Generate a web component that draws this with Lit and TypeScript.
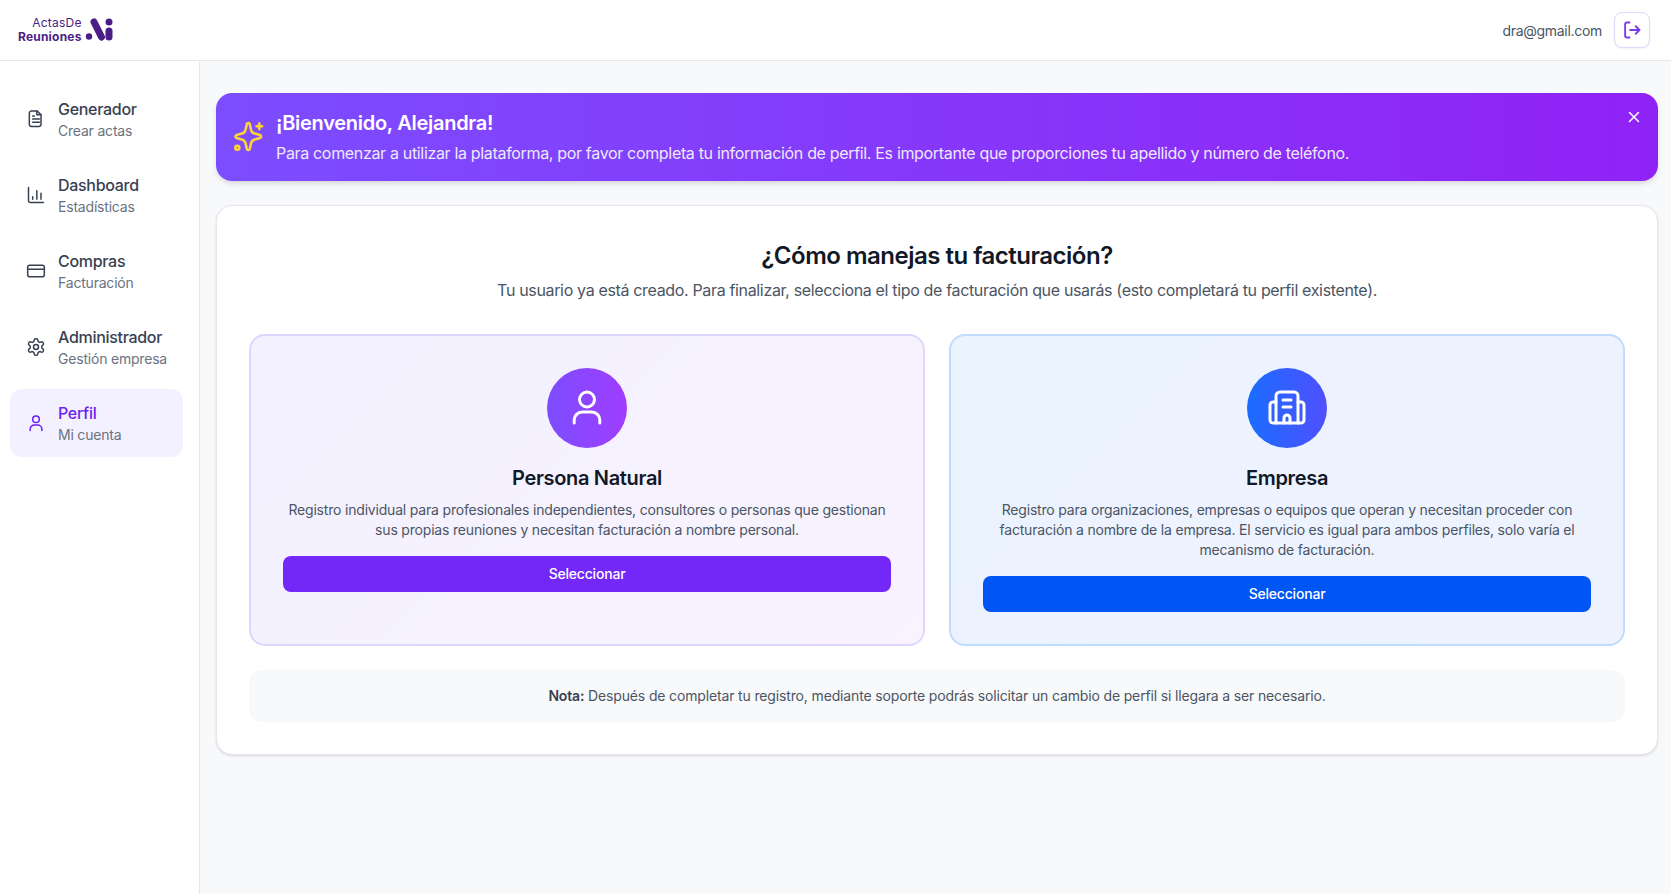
import { LitElement, html, css, svg } from "lit";
import { customElement } from "lit/decorators.js";

const navIcons: Record<string, unknown> = {
  file: svg`<path d="M6.5 2.5h7l4.500 4.500v11.500a2.500 2.500 0 0 1-2.500 2.500H6.500A2.500 2.500 0 0 1 4 18.500v-13.500a2.500 2.500 0 0 1 2.500-2.500z"/><path d="M13 2.500V7h5M8 12h8M8 16h8M8 8.500h2"/>`,
  chart: svg`<path d="M3 3v16a2 2 0 0 0 2 2h16M8 17v-3M13 17V7M18 17V10"/>`,
  card: svg`<rect x="2" y="5" width="20" height="14" rx="2.5"/><path d="M2 10h20"/>`,
  gear: svg`<path d="M12.22 2h-.44a2 2 0 0 0-2 2v.18a2 2 0 0 1-1 1.73l-.43.25a2 2 0 0 1-2 0l-.15-.08a2 2 0 0 0-2.73.73l-.22.38a2 2 0 0 0 .73 2.73l.15.1a2 2 0 0 1 1 1.72v.51a2 2 0 0 1-1 1.74l-.15.09a2 2 0 0 0-.73 2.73l.22.38a2 2 0 0 0 2.73.73l.15-.08a2 2 0 0 1 2 0l.43.25a2 2 0 0 1 1 1.73V20a2 2 0 0 0 2 2h.44a2 2 0 0 0 2-2v-.18a2 2 0 0 1 1-1.73l.43-.25a2 2 0 0 1 2 0l.15.08a2 2 0 0 0 2.73-.73l.22-.39a2 2 0 0 0-.73-2.73l-.15-.08a2 2 0 0 1-1-1.74v-.5a2 2 0 0 1 1-1.74l.15-.09a2 2 0 0 0 .73-2.73l-.22-.38a2 2 0 0 0-2.73-.73l-.15.08a2 2 0 0 1-2 0l-.43-.25a2 2 0 0 1-1-1.73V4a2 2 0 0 0-2-2z"/><circle cx="12" cy="12" r="3"/>`,
  user: svg`<circle cx="12" cy="7.5" r="4"/><path d="M5 21v-1.5a5 5 0 0 1 5-5h4a5 5 0 0 1 5 5V21"/>`,
};

const navItems = [
  { icon: "file", title: "Generador", sub: "Crear actas" },
  { icon: "chart", title: "Dashboard", sub: "Estadísticas" },
  { icon: "card", title: "Compras", sub: "Facturación" },
  { icon: "gear", title: "Administrador", sub: "Gestión empresa" },
  { icon: "user", title: "Perfil", sub: "Mi cuenta", active: true },
];

@customElement("app-root")
export class AppRoot extends LitElement {
  static styles = css`
    :host {
      display: flex;
      flex-direction: column;
      height: 100vh;
      overflow: hidden;
      background: #f8f9fb;
      font-family: Inter, "Liberation Sans", sans-serif;
      color: #111827;
    }
    header {
      flex: none;
      height: 60px;
      box-sizing: content-box;
      border-bottom: 1px solid #e5e7eb;
      background: #fff;
      display: flex;
      align-items: center;
      justify-content: space-between;
      padding: 0 21px 0 18px;
    }
    .logo {
      display: flex;
      align-items: center;
      gap: 2px;
      color: #4c1d87;
    }
    .logo-text {
      display: flex;
      flex-direction: column;
      align-items: flex-end;
      font-size: 12px;
      line-height: 14px;
      letter-spacing: 0.2px;
    }
    .logo-text b {
      font-weight: 700;
    }
    .account {
      display: flex;
      align-items: center;
      gap: 12px;
      font-size: 14px;
      letter-spacing: -0.3px;
      color: #4b5563;
    }
    .logout {
      width: 36px;
      height: 36px;
      box-sizing: border-box;
      border: 1px solid #ddd6fe;
      border-radius: 8px;
      background: #fff;
      display: flex;
      align-items: center;
      justify-content: center;
      padding: 0;
      color: #7c3aed;
      box-shadow: 0 1px 2px rgba(0, 0, 0, 0.05);
    }
    .body {
      flex: 1;
      display: flex;
      min-height: 0;
    }
    aside {
      flex: none;
      width: 200px;
      box-sizing: border-box;
      background: #fff;
      border-right: 1px solid #e5e7eb;
      padding: 24px 16px 0 10px;
      display: flex;
      flex-direction: column;
      gap: 8px;
    }
    .nav {
      display: flex;
      align-items: center;
      gap: 12px;
      padding: 12px 16px;
      border-radius: 12px;
      color: #374151;
      white-space: nowrap;
    }
    .nav svg {
      flex: none;
      width: 20px;
      height: 20px;
      fill: none;
      stroke: currentColor;
      stroke-width: 1.8;
      stroke-linecap: round;
      stroke-linejoin: round;
    }
    .nav-title {
      font-size: 16px;
      line-height: 24px;
      font-weight: 500;
      letter-spacing: -0.3px;
    }
    .nav-sub {
      font-size: 14px;
      line-height: 20px;
      letter-spacing: -0.2px;
      color: #6b7280;
    }
    .nav.active {
      background: #f3f0ff;
      color: #6d1ff0;
    }
    main {
      flex: 1;
      min-width: 0;
      padding: 32px 13px 32px 16px;
      display: flex;
      flex-direction: column;
      gap: 24px;
    }
    .banner {
      display: flex;
      align-items: center;
      gap: 12px;
      padding: 16px;
      border-radius: 16px;
      background: linear-gradient(90deg, #7c4dff, #9022f5);
      color: #fff;
      box-shadow: 0 4px 6px -1px rgba(0, 0, 0, 0.1),
        0 2px 4px -2px rgba(0, 0, 0, 0.1);
    }
    .banner-text {
      flex: 1;
    }
    .banner h2 {
      margin: 0 0 4px;
      font-size: 20px;
      line-height: 28px;
      font-weight: 600;
      letter-spacing: -0.28px;
    }
    .banner p {
      margin: 0;
      font-size: 16px;
      line-height: 24px;
      letter-spacing: -0.33px;
      color: #ede9fe;
    }
    .close {
      align-self: flex-start;
      flex: none;
      width: 16px;
      height: 16px;
      color: #fff;
    }
    .card {
      background: #fff;
      border: 1px solid #e5e7eb;
      border-radius: 16px;
      padding: 32px;
      box-shadow: 0 1px 3px rgba(0, 0, 0, 0.1), 0 1px 2px -1px rgba(0, 0, 0, 0.1);
    }
    .card h1 {
      margin: 0 0 6px;
      padding-top: 2px;
      text-align: center;
      font-size: 24px;
      line-height: 32px;
      font-weight: 600;
      letter-spacing: -0.5px;
    }
    .lead {
      margin: 0 0 32px;
      text-align: center;
      font-size: 16px;
      line-height: 24px;
      letter-spacing: -0.34px;
      color: #4b5563;
    }
    .options {
      display: grid;
      grid-template-columns: 1fr 1fr;
      gap: 24px;
    }
    .option {
      border: 2px solid;
      border-radius: 16px;
      padding: 32px;
      display: flex;
      flex-direction: column;
      align-items: center;
      text-align: center;
    }
    .option.person {
      border-color: #ddd6fe;
      background: linear-gradient(135deg, #f3f0ff, #f8f3fe);
    }
    .option.company {
      border-color: #bfdbfe;
      background: linear-gradient(135deg, #ebf3ff, #eef2ff);
    }
    .circle {
      width: 80px;
      height: 80px;
      border-radius: 50%;
      display: flex;
      align-items: center;
      justify-content: center;
      margin-bottom: 16px;
    }
    .person .circle {
      background: linear-gradient(90deg, #7c4dff, #a03dff);
    }
    .company .circle {
      background: linear-gradient(90deg, #1a6dff, #5050ff);
    }
    .circle svg {
      width: 40px;
      height: 40px;
      fill: none;
      stroke: #fff;
      stroke-width: 3;
      stroke-linecap: round;
      stroke-linejoin: round;
    }
    .option h3 {
      margin: 0 0 8px;
      font-size: 20px;
      line-height: 28px;
      font-weight: 600;
      letter-spacing: -0.33px;
    }
    .option p {
      margin: 0 0 16px;
      font-size: 14px;
      line-height: 20px;
      letter-spacing: -0.19px;
      color: #4b5563;
    }
    .select {
      width: 100%;
      height: 36px;
      border: 0;
      border-radius: 8px;
      color: #fff;
      font: 500 14px/20px Inter, "Liberation Sans", sans-serif;
      letter-spacing: -0.2px;
    }
    .person .select {
      background: #7428f8;
    }
    .company .select {
      background: #0055f5;
    }
    .note {
      margin-top: 24px;
      padding: 16px;
      border-radius: 12px;
      background: #f8f9fb;
      text-align: center;
      font-size: 14px;
      line-height: 20px;
      letter-spacing: -0.15px;
      color: #4b5563;
    }
    .note b {
      font-weight: 600;
      color: #374151;
    }
  `;

  render() {
    return html`
      <header>
        <div class="logo">
          <div class="logo-text"><span>ActasDe</span><b>Reuniones</b></div>
          <svg width="30" height="24" viewBox="0 0 30 24">
            <circle cx="5" cy="18.500" r="3.200" fill="currentColor" />
            <path d="M10 4l7.500 15" stroke="currentColor" stroke-width="7" stroke-linecap="round" />
            <circle cx="25" cy="4" r="3.500" fill="currentColor" />
            <path d="M25 13v6" stroke="currentColor" stroke-width="7" stroke-linecap="round" />
          </svg>
        </div>
        <div class="account">
          <span>dra@gmail.com</span>
          <button class="logout">
            <svg width="20" height="20" viewBox="0 0 16 16" fill="none" stroke="currentColor" stroke-width="1.5" stroke-linecap="round" stroke-linejoin="round">
              <path d="M6 2H3.800A1.300 1.300 0 0 0 2.500 3.300v9.400A1.300 1.300 0 0 0 3.800 14H6M6.500 8h7M11 5l3 3-3 3" />
            </svg>
          </button>
        </div>
      </header>
      <div class="body">
        <aside>
          ${navItems.map(
            (item) => html`
              <div class="nav ${item.active ? "active" : ""}">
                <svg viewBox="0 0 24 24">${navIcons[item.icon]}</svg>
                <div>
                  <div class="nav-title">${item.title}</div>
                  <div class="nav-sub">${item.sub}</div>
                </div>
              </div>
            `
          )}
        </aside>
        <main>
          <section class="banner">
            <svg width="32" height="32" viewBox="0 0 32 32" fill="none" stroke="#fcd535" stroke-width="2.600" stroke-linecap="round" stroke-linejoin="round">
              <path d="M14.800 3.200c.4-1.500 2.600-1.500 3 0l1.300 5.800a5 5 0 0 0 3.600 3.600l5.300 1.400c1.500.4 1.500 2.600 0 3l-5.300 1.400a5 5 0 0 0-3.600 3.600l-1.300 5.800c-.4 1.500-2.600 1.500-3 0l-1.300-5.800a5 5 0 0 0-3.600-3.600l-5.300-1.400c-1.500-.4-1.500-2.600 0-3l5.300-1.400a5 5 0 0 0 3.600-3.600z" />
              <path d="M27.300 2.500v5.600M24.500 5.300h5.600" />
              <circle cx="5.300" cy="26.700" r="2" />
            </svg>
            <div class="banner-text">
              <h2>¡Bienvenido, Alejandra!</h2>
              <p>Para comenzar a utilizar la plataforma, por favor completa tu información de perfil. Es importante que proporciones tu apellido y número de teléfono.</p>
            </div>
            <svg class="close" viewBox="0 0 16 16" fill="none" stroke="currentColor" stroke-width="1.5" stroke-linecap="round">
              <path d="M3.500 3.500l9 9M12.500 3.500l-9 9" />
            </svg>
          </section>
          <section class="card">
            <h1>¿Cómo manejas tu facturación?</h1>
            <p class="lead">Tu usuario ya está creado. Para finalizar, selecciona el tipo de facturación que usarás (esto completará tu perfil existente).</p>
            <div class="options">
              <div class="option person">
                <div class="circle">
                  <svg viewBox="0 0 40 40">
                    <circle cx="20" cy="11.500" r="7.500" />
                    <path d="M7.200 35v-3a8 8 0 0 1 8-8h9.600a8 8 0 0 1 8 8v3" />
                  </svg>
                </div>
                <h3>Persona Natural</h3>
                <p>Registro individual para profesionales independientes, consultores o personas que gestionan sus propias reuniones y necesitan facturación a nombre personal.</p>
                <button class="select">Seleccionar</button>
              </div>
              <div class="option company">
                <div class="circle">
                  <svg viewBox="0 0 40 40">
                    <path d="M9 35V8a4 4 0 0 1 4-4h14a4 4 0 0 1 4 4v27" />
                    <path d="M9 14H6a3 3 0 0 0-3 3v15a3 3 0 0 0 3 3h28a3 3 0 0 0 3-3V17a3 3 0 0 0-3-3h-3" />
                    <path d="M16 12h8M16 19h8M17 35v-5a3 3 0 0 1 6 0v5" />
                  </svg>
                </div>
                <h3>Empresa</h3>
                <p>Registro para organizaciones, empresas o equipos que operan y necesitan proceder con facturación a nombre de la empresa. El servicio es igual para ambos perfiles, solo varía el mecanismo de facturación.</p>
                <button class="select">Seleccionar</button>
              </div>
            </div>
            <div class="note"><b>Nota:</b> Después de completar tu registro, mediante soporte podrás solicitar un cambio de perfil si llegara a ser necesario.</div>
          </section>
        </main>
      </div>
    `;
  }
}
